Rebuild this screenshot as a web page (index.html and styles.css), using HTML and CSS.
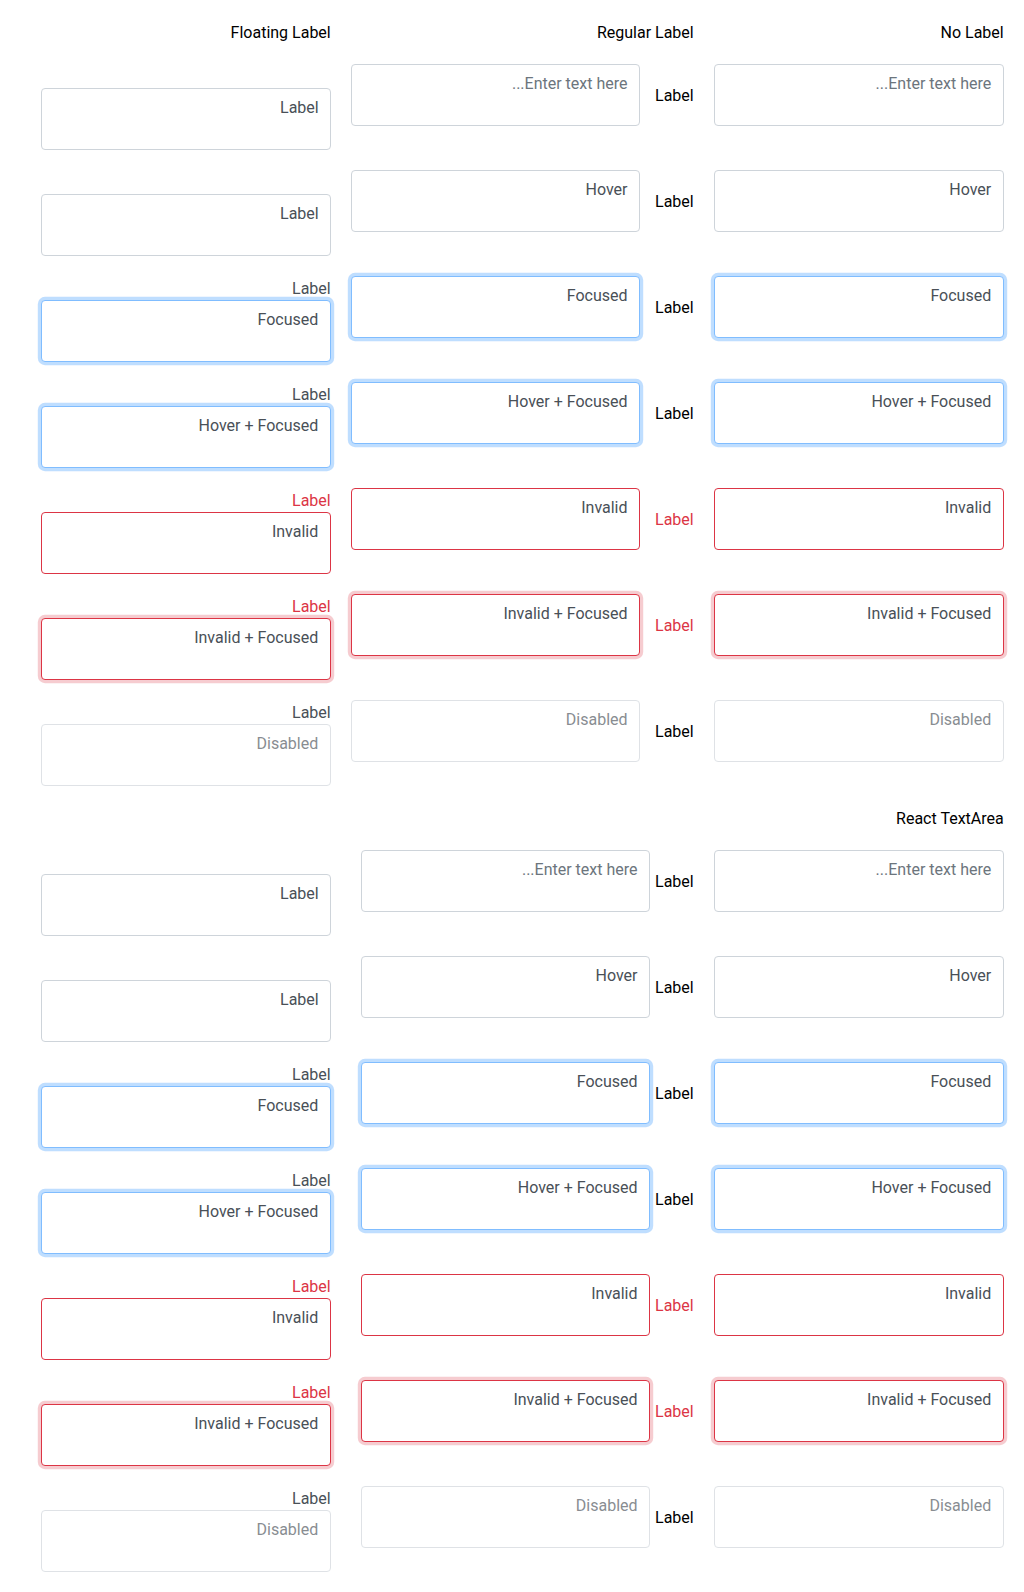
FILE: index.html
```html
<!DOCTYPE html>
<html lang="en" dir="rtl">
<head>
<meta charset="utf-8">
<title>TextArea states</title>
<link rel="stylesheet" href="styles.css">
</head>
<body>
<main class="page">
  <section class="grid">
    <div class="head">No Label</div>
    <div class="head">Regular Label</div>
    <div class="head">Floating Label</div>

    <div class="cell"><textarea class="field" rows="2" placeholder="Enter text here..."></textarea></div>
    <div class="cell reg"><label class="reg-label">Label</label><textarea class="field" rows="2" placeholder="Enter text here..."></textarea></div>
    <div class="cell float"><label class="float-label inside">Label</label><textarea class="field" rows="2"></textarea></div>

    <div class="cell"><textarea class="field" rows="2">Hover</textarea></div>
    <div class="cell reg"><label class="reg-label">Label</label><textarea class="field" rows="2">Hover</textarea></div>
    <div class="cell float"><label class="float-label inside">Label</label><textarea class="field" rows="2"></textarea></div>

    <div class="cell"><textarea class="field focus" rows="2">Focused</textarea></div>
    <div class="cell reg"><label class="reg-label">Label</label><textarea class="field focus" rows="2">Focused</textarea></div>
    <div class="cell float"><label class="float-label">Label</label><textarea class="field focus" rows="2">Focused</textarea></div>

    <div class="cell"><textarea class="field focus" rows="2">Hover + Focused</textarea></div>
    <div class="cell reg"><label class="reg-label">Label</label><textarea class="field focus" rows="2">Hover + Focused</textarea></div>
    <div class="cell float"><label class="float-label">Label</label><textarea class="field focus" rows="2">Hover + Focused</textarea></div>

    <div class="cell"><textarea class="field invalid" rows="2">Invalid</textarea></div>
    <div class="cell reg"><label class="reg-label invalid-text">Label</label><textarea class="field invalid" rows="2">Invalid</textarea></div>
    <div class="cell float"><label class="float-label invalid-text">Label</label><textarea class="field invalid" rows="2">Invalid</textarea></div>

    <div class="cell"><textarea class="field invalid focus" rows="2">Invalid + Focused</textarea></div>
    <div class="cell reg"><label class="reg-label invalid-text">Label</label><textarea class="field invalid focus" rows="2">Invalid + Focused</textarea></div>
    <div class="cell float"><label class="float-label invalid-text">Label</label><textarea class="field invalid focus" rows="2">Invalid + Focused</textarea></div>

    <div class="cell"><textarea class="field" rows="2" disabled>Disabled</textarea></div>
    <div class="cell reg"><label class="reg-label">Label</label><textarea class="field" rows="2" disabled>Disabled</textarea></div>
    <div class="cell float"><label class="float-label">Label</label><textarea class="field" rows="2" disabled>Disabled</textarea></div>
  </section>

  <section class="grid">
    <div class="head">React TextArea</div>
    <div class="head"></div>
    <div class="head"></div>

    <div class="cell"><textarea class="field" rows="2" placeholder="Enter text here..."></textarea></div>
    <div class="cell reg tight"><label class="reg-label">Label</label><textarea class="field" rows="2" placeholder="Enter text here..."></textarea></div>
    <div class="cell float"><label class="float-label inside">Label</label><textarea class="field" rows="2"></textarea></div>

    <div class="cell"><textarea class="field" rows="2">Hover</textarea></div>
    <div class="cell reg tight"><label class="reg-label">Label</label><textarea class="field" rows="2">Hover</textarea></div>
    <div class="cell float"><label class="float-label inside">Label</label><textarea class="field" rows="2"></textarea></div>

    <div class="cell"><textarea class="field focus" rows="2">Focused</textarea></div>
    <div class="cell reg tight"><label class="reg-label">Label</label><textarea class="field focus" rows="2">Focused</textarea></div>
    <div class="cell float"><label class="float-label">Label</label><textarea class="field focus" rows="2">Focused</textarea></div>

    <div class="cell"><textarea class="field focus" rows="2">Hover + Focused</textarea></div>
    <div class="cell reg tight"><label class="reg-label">Label</label><textarea class="field focus" rows="2">Hover + Focused</textarea></div>
    <div class="cell float"><label class="float-label">Label</label><textarea class="field focus" rows="2">Hover + Focused</textarea></div>

    <div class="cell"><textarea class="field invalid" rows="2">Invalid</textarea></div>
    <div class="cell reg tight"><label class="reg-label invalid-text">Label</label><textarea class="field invalid" rows="2">Invalid</textarea></div>
    <div class="cell float"><label class="float-label invalid-text">Label</label><textarea class="field invalid" rows="2">Invalid</textarea></div>

    <div class="cell"><textarea class="field invalid focus" rows="2">Invalid + Focused</textarea></div>
    <div class="cell reg tight"><label class="reg-label invalid-text">Label</label><textarea class="field invalid focus" rows="2">Invalid + Focused</textarea></div>
    <div class="cell float"><label class="float-label invalid-text">Label</label><textarea class="field invalid focus" rows="2">Invalid + Focused</textarea></div>

    <div class="cell"><textarea class="field" rows="2" disabled>Disabled</textarea></div>
    <div class="cell reg tight"><label class="reg-label">Label</label><textarea class="field" rows="2" disabled>Disabled</textarea></div>
    <div class="cell float"><label class="float-label">Label</label><textarea class="field" rows="2" disabled>Disabled</textarea></div>
  </section>
</main>
</body>
</html>
```
FILE: styles.css
```css
* { box-sizing: border-box; }

html, body {
  margin: 0;
  padding: 0;
  background: #fff;
}

body {
  font-family: Roboto, "Liberation Sans", Arial, sans-serif;
  font-size: 16px;
  line-height: 24px;
  color: #000;
}

.page {
  padding: 20px 20.3px;
  display: flex;
  flex-direction: column;
  gap: 20px;
}

.grid {
  display: grid;
  grid-template-columns: 289.4px 342.4px 289.4px;
  column-gap: 20.6px;
  row-gap: 20px;
  justify-content: start;
  align-items: start;
}

.head {
  height: 24px;
  padding-top: 1px;
  text-align: right;
  color: #000;
}

.cell {
  position: relative;
}

.reg {
  display: flex;
  align-items: center;
  gap: 15px;
}

.reg.tight {
  gap: 5px;
}

.reg-label {
  flex: none;
  padding-top: 1px;
  color: #000;
}

.float {
  padding-top: 24px;
}

.float-label {
  position: absolute;
  top: 1px;
  right: 0;
  line-height: 24px;
  color: #495057;
  pointer-events: none;
}

.float-label.inside {
  top: 32px;
  right: 12px;
  z-index: 1;
}

.invalid-text {
  color: #dc3545;
}

.field {
  display: block;
  width: 289.4px;
  height: 62px;
  margin: 0;
  padding: 7px 11.5px 5px 12px;
  font-family: Roboto, "Liberation Sans", Arial, sans-serif;
  font-size: 16px;
  line-height: 24px;
  color: #495057;
  background: #fff;
  border: 1px solid #ced4da;
  border-radius: 4px;
  resize: none;
  overflow: hidden;
  outline: none;
  text-align: right;
  direction: rtl;
}

.field::placeholder {
  color: #6c757d;
  opacity: 1;
}

.field.focus {
  border-color: #80bdff;
  box-shadow: 0 0 0 3.2px rgba(0, 123, 255, 0.25);
}

.field.invalid {
  border-color: #dc3545;
}

.field.invalid.focus {
  border-color: #dc3545;
  box-shadow: 0 0 0 3.2px rgba(220, 53, 69, 0.25);
}

.field:disabled {
  opacity: 0.65;
  background: #fff;
  color: #495057;
}
```
